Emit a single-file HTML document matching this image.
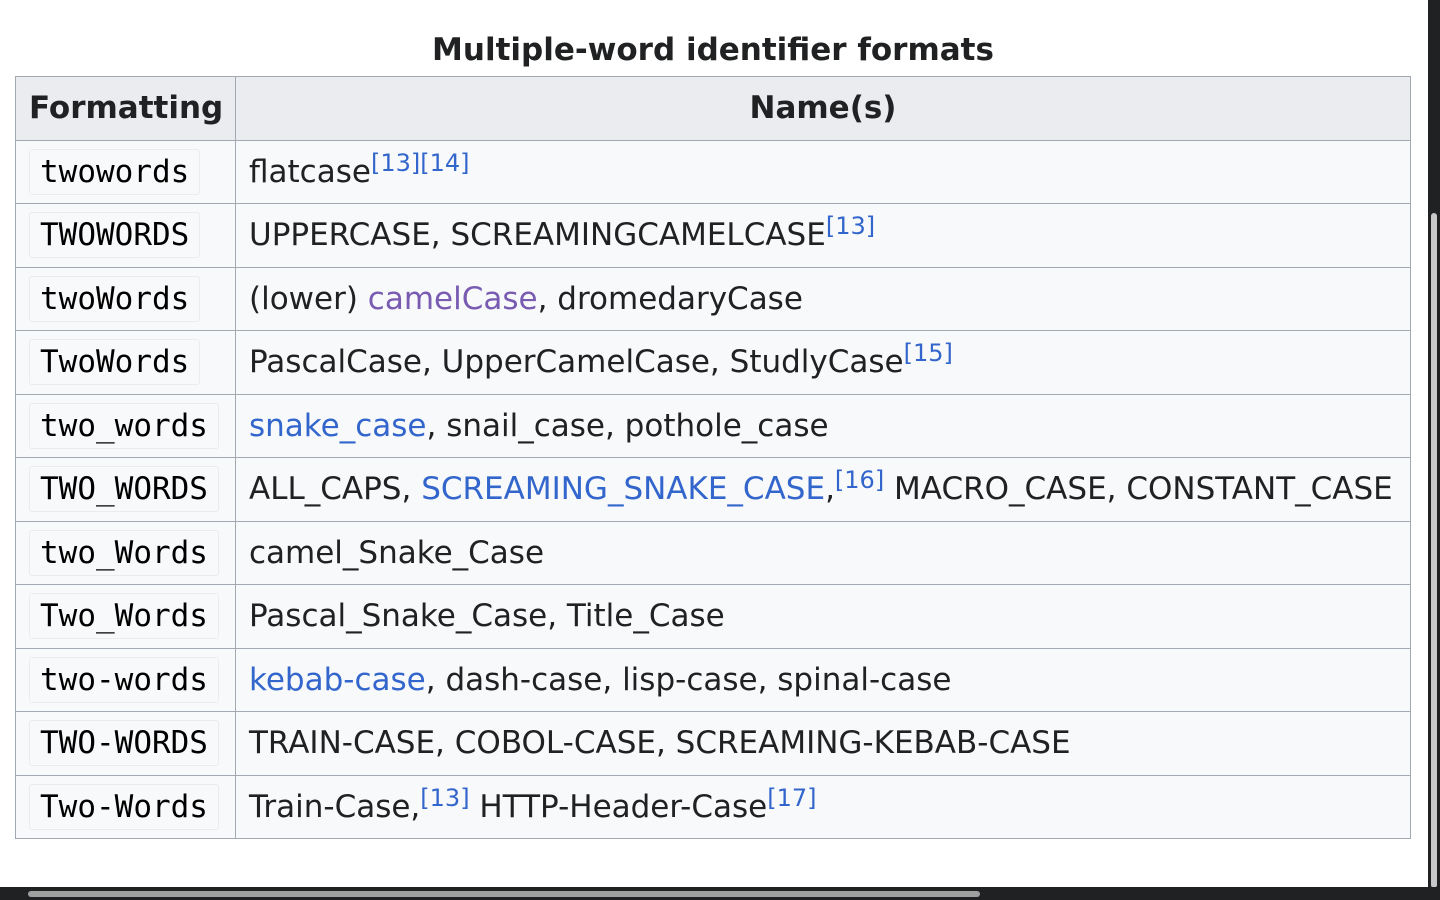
<!DOCTYPE html>
<html><head><meta charset="utf-8"><style>
html,body{margin:0;padding:0;background:#fff;width:1440px;height:900px;overflow:hidden;}
body{font-family:"DejaVu Sans","Liberation Sans",sans-serif;color:#202122;position:relative;}
.cap{position:absolute;left:16px;width:1394px;top:29px;text-align:center;font-weight:bold;font-size:31px;line-height:42px;}
table{position:absolute;left:15px;top:76px;border-collapse:collapse;table-layout:fixed;width:1395px;background:#f8f9fa;font-size:31px;}
th,td{border:1.5px solid #a2a9b1;padding:0 13px;height:62.5px;vertical-align:middle;white-space:nowrap;}
th{background:#eaecf0;font-weight:bold;font-size:31px;}
th.f{text-align:left;}
code{font-family:"DejaVu Sans Mono","Liberation Mono",monospace;font-size:31px;background:#f8f9fa;border:1px solid #eaecf0;border-radius:3px;padding:4px 10px;color:#000;}
a{color:#3366cc;text-decoration:none;}
a.v{color:#795cb2;}
sup{font-size:24px;line-height:0;vertical-align:0;position:relative;top:-11px;color:#3366cc;}
.vs{position:absolute;right:0;top:0;width:12px;height:888px;background:#202122;}
.vt{position:absolute;left:1431px;top:213px;width:6px;height:675px;background:#c8c8c8;border-radius:3px;}
.hs{position:absolute;left:0;top:887px;width:1440px;height:13px;background:#202122;}
.ht{position:absolute;left:28px;top:891px;width:952px;height:6px;background:#9fa1a1;border-radius:3px;}
</style></head><body>
<div class="cap">Multiple-word identifier formats</div>
<table>
<colgroup><col style="width:220px"><col style="width:1175px"></colgroup>
<tr><th class="f">Formatting</th><th>Name(s)</th></tr>
<tr><td><code>twowords</code></td><td>flatcase<sup>[13][14]</sup></td></tr>
<tr><td><code>TWOWORDS</code></td><td>UPPERCASE, SCREAMINGCAMELCASE<sup>[13]</sup></td></tr>
<tr><td><code>twoWords</code></td><td>(lower) <a class="v">camelCase</a>, dromedaryCase</td></tr>
<tr><td><code>TwoWords</code></td><td>PascalCase, UpperCamelCase, StudlyCase<sup>[15]</sup></td></tr>
<tr><td><code>two_words</code></td><td><a>snake_case</a>, snail_case, pothole_case</td></tr>
<tr><td><code>TWO_WORDS</code></td><td>ALL_CAPS, <a>SCREAMING_SNAKE_CASE</a>,<sup>[16]</sup> MACRO_CASE, CONSTANT_CASE</td></tr>
<tr><td><code>two_Words</code></td><td>camel_Snake_Case</td></tr>
<tr><td><code>Two_Words</code></td><td>Pascal_Snake_Case, Title_Case</td></tr>
<tr><td><code>two-words</code></td><td><a>kebab-case</a>, dash-case, lisp-case, spinal-case</td></tr>
<tr><td><code>TWO-WORDS</code></td><td>TRAIN-CASE, COBOL-CASE, SCREAMING-KEBAB-CASE</td></tr>
<tr><td><code>Two-Words</code></td><td>Train-Case,<sup>[13]</sup> HTTP-Header-Case<sup>[17]</sup></td></tr>
</table>
<div class="vs"></div><div class="vt"></div>
<div class="hs"></div><div class="ht"></div>
</body></html>
